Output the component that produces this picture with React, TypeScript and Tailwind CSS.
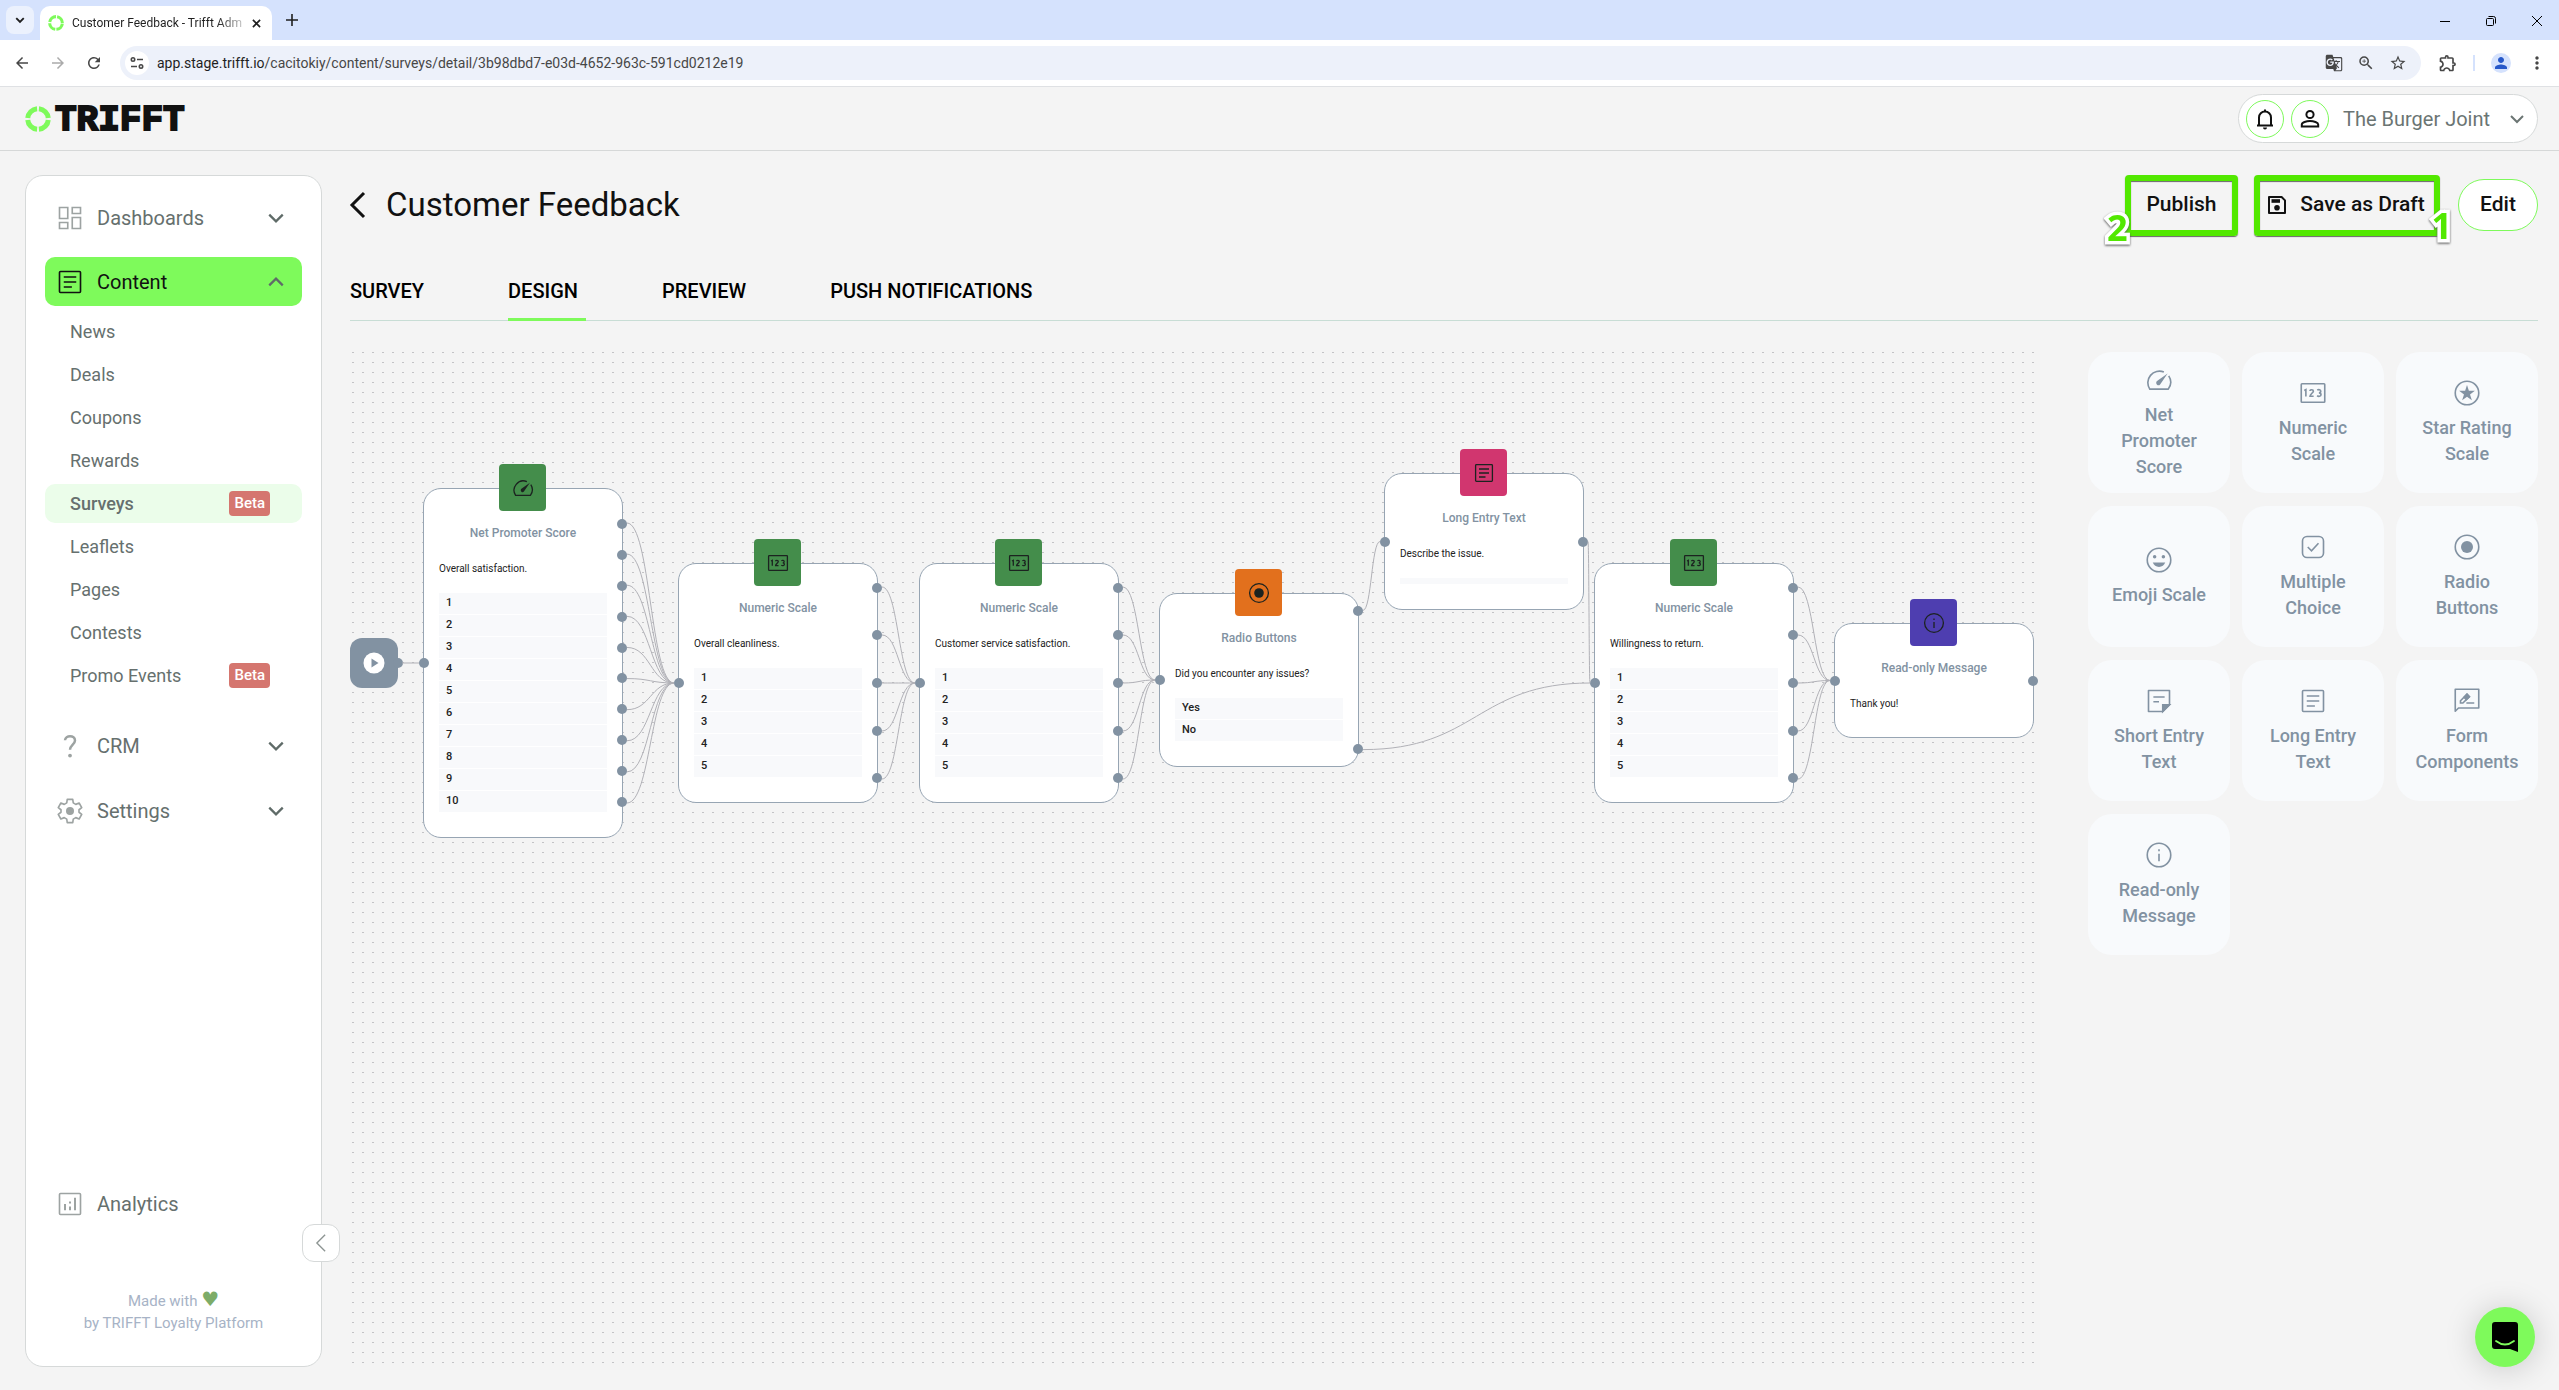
import { ReactNode, useState } from "react";
import {
  MdArrowBack,
  MdArrowForward,
  MdGTranslate,
  MdMoreVert,
  MdOutlineExtension,
  MdPerson,
  MdRefresh,
  MdStarOutline,
  MdZoomIn,
} from "react-icons/md";

type IconName =
  | "speed"
  | "numeric"
  | "star"
  | "emoji"
  | "check"
  | "radio"
  | "shortText"
  | "longText"
  | "form"
  | "info"
  | "dashboard"
  | "question"
  | "settings"
  | "analytics"
  | "save"
  | "bell"
  | "user";

interface IStep {
  id: string;
  icon: IconName;
  color: string;
  title: string;
  text: string;
  x: number;
  y: number;
  height: number;
  options?: string[];
  hasField?: boolean;
  outputs: number;
}

// ** Icons
const shapes: Record<IconName, ReactNode> = {
  speed: (
    <>
      <path d="M15.9 5.6A9.3 9.3 0 0 0 4.6 19.3h14.8a9.3 9.3 0 0 0 .4-10.6" />
      <path
        d="M10.4 15.7c-.9-.9-.8-2.200 0-2.900l8.500-6-6 8.700c-.600.900-1.800 1-2.500.200Z"
        fill="currentColor"
        stroke="none"
      />
    </>
  ),
  numeric: (
    <>
      <rect x="2.6" y="4.600" width="18.800" height="14.800" rx=".6" />
      <path d="M5 10l1.300-.700v5.400M9.600 10.300c0-1.200 2.700-1.300 2.700.2 0 1.200-2.700 2.400-2.700 4.100h2.900M15.400 9.700c1-.700 2.800-.4 2.800.9 0 1-.8 1.300-1.500 1.300 1 0 1.700.5 1.700 1.400 0 1.500-2.200 1.700-3.100.8" />
    </>
  ),
  star: (
    <>
      <circle cx="12" cy="12" r="9.400" />
      <path
        d="M12 5.600l1.500 4.600h4.800l-3.900 2.900 1.500 4.700-3.900-2.900-3.900 2.900 1.500-4.700-3.900-2.900h4.800Z"
        fill="currentColor"
        stroke="none"
      />
    </>
  ),
  emoji: (
    <>
      <circle cx="12" cy="12" r="9.400" />
      <g fill="currentColor" stroke="none">
        <circle cx="8.500" cy="9.300" r="1.400" />
        <circle cx="15.500" cy="9.300" r="1.400" />
        <path d="M7 14h10c-.8 2.200-2.700 3.500-5 3.500S7.800 16.200 7 14Z" />
      </g>
    </>
  ),
  check: (
    <>
      <rect x="3.600" y="3.600" width="16.800" height="16.800" rx="3.600" />
      <path d="M7.800 12l3 3 5.600-6" />
    </>
  ),
  radio: (
    <>
      <circle cx="12" cy="12" r="9.400" />
      <circle cx="12" cy="12" r="4.800" fill="currentColor" stroke="none" />
    </>
  ),
  shortText: (
    <>
      <path d="M3.600 3.600h16.800v11.400l-5.400 5.400H3.600Z" strokeLinejoin="round" />
      <path d="M15 20.400V15h5.400Z" fill="currentColor" />
      <path d="M7.500 8.800h9M7.500 12.600h4.500" />
    </>
  ),
  longText: (
    <>
      <rect x="3.600" y="3.600" width="16.800" height="16.800" rx=".8" />
      <path d="M7 8h10M7 12h10M7 16h6.500" />
    </>
  ),
  form: (
    <>
      <path d="M2.600 2.600h18.800v15H5.200l-2.600 2.600Z" strokeLinejoin="round" />
      <path d="M11.500 13.600h6.300M6.800 13.600v-1.800l5.200-5.200 1.900 1.900-5.200 5.100Z" />
      <path d="M9.600 9l2.400-2.400 1.900 1.900-2.400 2.400Z" fill="currentColor" />
    </>
  ),
  info: (
    <>
      <circle cx="12" cy="12" r="9.400" />
      <path d="M12 11v6M12 7.400v1.500" />
    </>
  ),
  dashboard: (
    <path d="M3.600 3.600h6.600v8.800H3.600ZM13.800 3.600h6.600v4.800h-6.600ZM13.800 11.600h6.600v8.800h-6.600ZM3.600 15.600h6.600v4.800H3.600Z" />
  ),
  question: (
    <>
      <path d="M8 7.400c.3-4.400 8-4.400 8 .2 0 3-4 3.600-4 7.400" strokeWidth="2" />
      <circle cx="12" cy="19.600" r="1.500" fill="currentColor" stroke="none" />
    </>
  ),
  settings: (
    <>
      <path
        d="M9.800 2.700h4.400l.4 2.800 2 1.200 2.700-1.100 2.100 3.700-2.200 1.700v2l2.200 1.700-2.100 3.700-2.700-1.100-2 1.200-.4 2.800H9.800l-.4-2.800-2-1.200-2.700 1.100-2.100-3.700L4.800 13v-2L2.600 9.300l2.100-3.700 2.700 1.100 2-1.200Z"
        strokeLinejoin="round"
      />
      <circle cx="12" cy="12" r="3.200" fill="currentColor" stroke="none" />
    </>
  ),
  analytics: (
    <>
      <rect x="3.600" y="3.600" width="16.800" height="16.800" rx=".8" />
      <path d="M8 12v5M12 14v3M12 10v1.600M16 7v10" strokeWidth="1.600" />
    </>
  ),
  save: (
    <>
      <path d="M4 4h12.600L20 7.400V20H4Z" strokeWidth="2" strokeLinejoin="round" />
      <path d="M6.500 6.200h8.500v3.600H6.500Z" fill="currentColor" stroke="none" />
      <circle cx="12" cy="14.800" r="2.800" fill="currentColor" stroke="none" />
    </>
  ),
  bell: (
    <>
      <path d="M4 18.500h16M6 18v-7.500a6 6 0 0 1 12 0V18M12 4.500V2.500" strokeWidth="2" />
      <path d="M10 20.500h4a2 2 0 0 1-4 0Z" fill="currentColor" stroke="none" />
    </>
  ),
  user: (
    <>
      <circle cx="12" cy="7.500" r="3.600" strokeWidth="2" />
      <path d="M3.800 19.500v-2c0-2 4.500-3.500 8.200-3.500s8.200 1.500 8.200 3.500v2Z" strokeWidth="2" />
    </>
  ),
};

const Icon = ({ name, className = "size-[30px]" }: { name: IconName; className?: string }) => (
  <svg
    viewBox="0 0 24 24"
    fill="none"
    stroke="currentColor"
    strokeWidth="1.3"
    className={`shrink-0 ${className}`}
    aria-hidden="true"
  >
    {shapes[name]}
  </svg>
);

const Chevron = ({ dir = "down", className = "" }: { dir?: "down" | "up" | "left"; className?: string }) => {
  const paths = { down: "M2 5l6 6 6-6", up: "M2 11l6-6 6 6", left: "M11 2L5 8l6 6" };
  return (
    <svg viewBox="0 0 16 16" fill="none" stroke="currentColor" className={`shrink-0 ${className}`} aria-hidden="true">
      <path d={paths[dir]} />
    </svg>
  );
};

const Ring = ({ className }: { className: string }) => (
  <svg viewBox="0 0 26 26" fill="none" className={`shrink-0 ${className}`} aria-hidden="true">
    <circle
      cx="13"
      cy="13"
      r="10.300"
      stroke="#7efa5b"
      strokeWidth="5"
      pathLength="100"
      strokeDasharray="22 3"
      strokeDashoffset="-1.500"
    />
  </svg>
);

// ** Data
const subItems = [
  { label: "News" },
  { label: "Deals" },
  { label: "Coupons" },
  { label: "Rewards" },
  { label: "Surveys", beta: true },
  { label: "Leaflets" },
  { label: "Pages" },
  { label: "Contests" },
  { label: "Promo Events", beta: true },
];

const tabs = ["SURVEY", "DESIGN", "PREVIEW", "PUSH NOTIFICATIONS"];

const palette: { icon: IconName; label: string }[] = [
  { icon: "speed", label: "Net Promoter Score" },
  { icon: "numeric", label: "Numeric Scale" },
  { icon: "star", label: "Star Rating Scale" },
  { icon: "emoji", label: "Emoji Scale" },
  { icon: "check", label: "Multiple Choice" },
  { icon: "radio", label: "Radio Buttons" },
  { icon: "shortText", label: "Short Entry Text" },
  { icon: "longText", label: "Long Entry Text" },
  { icon: "form", label: "Form Components" },
  { icon: "info", label: "Read-only Message" },
];

const NODE_WIDTH = 200;
const range = (count: number) => Array.from({ length: count }, (_, idx) => `${idx + 1}`);

const steps: IStep[] = [
  { id: "nps", icon: "speed", color: "bg-[#448d4b]", title: "Net Promoter Score", text: "Overall satisfaction.", x: 73, y: 138, height: 350, options: range(10), outputs: 10 },
  { id: "clean", icon: "numeric", color: "bg-[#448d4b]", title: "Numeric Scale", text: "Overall cleanliness.", x: 328, y: 213, height: 240, options: range(5), outputs: 5 },
  { id: "service", icon: "numeric", color: "bg-[#448d4b]", title: "Numeric Scale", text: "Customer service satisfaction.", x: 569, y: 213, height: 240, options: range(5), outputs: 5 },
  { id: "issues", icon: "radio", color: "bg-[#e2701d]", title: "Radio Buttons", text: "Did you encounter any issues?", x: 809, y: 243, height: 174, options: ["Yes", "No"], outputs: 2 },
  { id: "describe", icon: "longText", color: "bg-[#d1366f]", title: "Long Entry Text", text: "Describe the issue.", x: 1034, y: 123, height: 137, hasField: true, outputs: 1 },
  { id: "return", icon: "numeric", color: "bg-[#448d4b]", title: "Numeric Scale", text: "Willingness to return.", x: 1244, y: 213, height: 240, options: range(5), outputs: 5 },
  { id: "thanks", icon: "info", color: "bg-[#4e3eb0]", title: "Read-only Message", text: "Thank you!", x: 1484, y: 273, height: 115, outputs: 1 },
];

// outputs are spread between 10% and 90% of the node height
const outputShare = (idx: number, count: number) => (count === 1 ? 0.5 : 0.1 + (0.8 * idx) / (count - 1));

const edgePath = (from: string, idx: number, to: string) => {
  const source = steps.find((step) => step.id === from)!;
  const target = steps.find((step) => step.id === to)!;
  const x1 = source.x + NODE_WIDTH + 4;
  const y1 = source.y + source.height * outputShare(idx, source.outputs);
  const x2 = target.x - 4;
  const y2 = target.y + target.height / 2;
  const mid = (x1 + x2) / 2;
  return `M${x1},${y1} C${mid},${y1} ${mid},${y2} ${x2},${y2}`;
};

const edges = [
  ...range(10).map((_, idx) => edgePath("nps", idx, "clean")),
  ...range(5).map((_, idx) => edgePath("clean", idx, "service")),
  ...range(5).map((_, idx) => edgePath("service", idx, "issues")),
  edgePath("issues", 0, "describe"),
  edgePath("issues", 1, "return"),
  edgePath("describe", 0, "return"),
  ...range(5).map((_, idx) => edgePath("return", idx, "thanks")),
];

// ** Browser bar
const BrowserBar = () => (
  <header className="text-[#1f1f1f]">
    <div className="flex h-10 items-end bg-[#d5e2fd] pl-1.5">
      <button aria-label="Search tabs" className="mb-1.5 flex size-7 items-center justify-center rounded-lg bg-[#ebf1fd]">
        <Chevron className="size-2.5 stroke-[3]" />
      </button>
      <div className="ml-1.5 flex h-[34px] w-[232px] items-center justify-between rounded-t-[10px] bg-white pr-2 pl-2">
        <div className="flex items-center gap-2">
          <Ring className="size-4" />
          <span className="bg-linear-to-r from-[#1f1f1f] from-85% to-[#c4c4c4] bg-clip-text text-xs whitespace-nowrap text-transparent">
            Customer Feedback - Trifft Adm
          </span>
        </div>
        <button aria-label="Close tab" className="flex size-4 items-center justify-center">
          <svg viewBox="0 0 10 10" stroke="currentColor" strokeWidth="1.800" className="size-[9px]">
            <path d="M1 1l8 8M9 1l-8 8" />
          </svg>
        </button>
      </div>
      <button aria-label="New tab" className="mb-3.5 ml-3.5 flex size-3 items-center justify-center">
        <svg viewBox="0 0 12 12" stroke="currentColor" strokeWidth="1.600" className="size-3">
          <path d="M6 0v12M0 6h12" />
        </svg>
      </button>
      <div className="mr-[17px] mb-3.5 ml-auto flex items-center gap-9 text-black">
        <button aria-label="Minimize">
          <svg viewBox="0 0 10 10" stroke="currentColor" className="size-2.5">
            <path d="M0 5.500h10" />
          </svg>
        </button>
        <button aria-label="Restore">
          <svg viewBox="0 0 10 10" fill="none" stroke="currentColor" className="size-2.5">
            <rect x=".5" y="2.500" width="7" height="7" rx="1" />
            <path d="M2.500.5h5a2 2 0 0 1 2 2v5" />
          </svg>
        </button>
        <button aria-label="Close">
          <svg viewBox="0 0 10 10" stroke="currentColor" className="size-2.5">
            <path d="M0 0l10 10M10 0L0 10" />
          </svg>
        </button>
      </div>
    </div>
    <div className="flex h-[47px] items-center border-b border-[#dfe1e4] bg-white pr-3 pl-[13px] text-[#474747]">
      <button aria-label="Back">
        <MdArrowBack className="size-[18px]" />
      </button>
      <button aria-label="Forward" className="ml-[18px] text-[#ababab]">
        <MdArrowForward className="size-[18px]" />
      </button>
      <button aria-label="Reload" className="ml-[18px]">
        <MdRefresh className="size-[18px]" />
      </button>
      <div className="ml-[17px] flex h-[34px] flex-1 items-center rounded-full bg-[#edf1fa] pr-3.5 pl-[5px]">
        <button aria-label="Site information" className="flex size-6 items-center justify-center rounded-full bg-white">
          <svg viewBox="0 0 14 14" fill="none" stroke="currentColor" strokeWidth="1.600" className="size-3.5">
            <circle cx="3" cy="3.500" r="1.700" />
            <path d="M7 3.500h6M1 10.500h6" />
            <circle cx="11" cy="10.500" r="1.700" />
          </svg>
        </button>
        <a href="#url" className="ml-2 flex-1 text-sm text-[#1f1f1f]">
          app.stage.trifft.io
          <span className="text-[#474747]">/cacitokiy/content/surveys/detail/3b98dbd7-e03d-4652-963c-591cd0212e19</span>
        </a>
        <div className="flex items-center gap-3.5">
          <button aria-label="Translate">
            <MdGTranslate className="size-[18px]" />
          </button>
          <button aria-label="Zoom">
            <MdZoomIn className="size-[18px]" />
          </button>
          <button aria-label="Bookmark">
            <MdStarOutline className="size-[18px]" />
          </button>
        </div>
      </div>
      <button aria-label="Extensions" className="ml-[17px]">
        <MdOutlineExtension className="size-5" />
      </button>
      <span className="ml-[15px] h-4 w-0.5 bg-[#d5e2fd]" />
      <button
        aria-label="Profile"
        className="ml-4 flex size-5 items-center justify-center rounded-full bg-[#d5e2fd] text-[#2758c9]"
      >
        <MdPerson className="size-[18px]" />
      </button>
      <button aria-label="Menu" className="ml-4">
        <MdMoreVert className="size-5" />
      </button>
    </div>
  </header>
);

const TopBar = () => (
  <div className="flex h-16 items-center justify-between border-b border-[#d6d8d8] pr-[21px] pl-[25px]">
    <a href="#home" className="flex items-center gap-1 text-[#111]">
      <Ring className="size-[26px]" />
      <span className="pt-1 font-['Liberation_Mono',monospace] text-[36px] leading-10 font-bold [-webkit-text-stroke:2px_#111]">
        TRIFFT
      </span>
    </a>
    <div className="flex h-[49px] w-[300px] items-center rounded-full border border-[#d6d9d9] bg-white pr-3 pl-[7px]">
      <button
        aria-label="Notifications"
        className="flex size-[38px] items-center justify-center rounded-full border border-[#7efa5b]"
      >
        <Icon name="bell" className="size-6" />
      </button>
      <button
        aria-label="Account"
        className="ml-[7px] flex size-[38px] items-center justify-center rounded-full border border-[#7efa5b]"
      >
        <Icon name="user" className="size-6" />
      </button>
      <button className="ml-3.5 flex flex-1 items-center justify-between text-xl text-[#6b7573]">
        The Burger Joint
        <Chevron className="size-4 stroke-2" />
      </button>
    </div>
  </div>
);

const MenuRow = ({ icon, label, active, dir }: { icon: IconName; label: string; active?: boolean; dir?: "down" | "up" }) => (
  <button
    className={`flex h-[49px] w-full items-center rounded-[10px] pr-[17px] pl-2.5 ${
      active ? "bg-[#7efa5b] text-[#111]" : "text-[#66706e]"
    }`}
  >
    <Icon name={icon} className={active ? "size-[30px]" : "size-[30px] text-[#9da3a2]"} />
    <span className="ml-3 flex-1 text-left text-xl">{label}</span>
    {dir && <Chevron dir={dir} className="size-[18px] stroke-2 text-[#5f6b68]" />}
  </button>
);

const Sidebar = () => (
  <aside className="relative flex w-[297px] shrink-0 flex-col rounded-[18px] border border-[#d6d9d9] bg-white px-[19px] pt-[17px] pb-8">
    <nav className="flex flex-1 flex-col">
      <MenuRow icon="dashboard" label="Dashboards" dir="down" />
      <div className="h-[15px]" />
      <MenuRow icon="longText" label="Content" active dir="up" />
      <ul className="mt-1.5 mb-[26px] space-y-1">
        {subItems.map((item) => (
          <li key={item.label}>
            <a
              href={`#${item.label}`}
              className={`flex h-[39px] items-center justify-between rounded-[10px] pr-8 pl-[25px] text-lg text-[#66706e] ${
                item.label === "Surveys" ? "bg-[#ebfdea] font-medium" : ""
              }`}
            >
              {item.label}
              {item.beta && (
                <span className="rounded-[4px] bg-[#d5766f] px-[5px] text-[15px] leading-[25px] font-medium text-white">
                  Beta
                </span>
              )}
            </a>
          </li>
        ))}
      </ul>
      <MenuRow icon="question" label="CRM" dir="down" />
      <div className="h-4" />
      <MenuRow icon="settings" label="Settings" dir="down" />
      <div className="mt-auto">
        <MenuRow icon="analytics" label="Analytics" />
      </div>
    </nav>
    <p className="mt-[61px] text-center text-[15px] leading-[22px] text-[#a7b3c6]">
      Made with <span className="font-['DejaVu_Sans',sans-serif] text-xl leading-[20px] text-[#7dac68]">♥</span>
      <br />
      by TRIFFT Loyalty Platform
    </p>
    <button
      aria-label="Collapse menu"
      className="absolute -right-[19px] bottom-[104px] flex size-[38px] items-center justify-center rounded-xl border border-[#d6d9d9] bg-white text-[#8d9593]"
    >
      <Chevron dir="left" className="size-[22px]" />
    </button>
  </aside>
);

const Handle = ({ top, side }: { top: number; side: "left" | "right" }) => (
  <span
    className={`absolute size-2.5 -translate-y-1/2 rounded-full bg-[#8292a2] ${
      side === "left" ? "-left-[5px]" : "-right-[5px]"
    }`}
    style={{ top: `${top * 100}%` }}
  />
);

const StepNode = ({ step }: { step: IStep }) => (
  <article
    className="absolute w-[200px] rounded-[18px] border border-[#97a5b3] bg-white px-[15px] pt-[34px] pb-[25px]"
    style={{ left: step.x, top: step.y }}
  >
    <div
      className={`absolute -top-[25px] left-[75px] flex size-[47px] items-center justify-center rounded-[4px] text-[#1c2320] ${step.color}`}
    >
      <Icon name={step.icon} className="size-6" />
    </div>
    <h3 className="text-center text-xs leading-5 font-medium text-[#8292a2]">{step.title}</h3>
    <p className="mt-[18px] text-[10px] leading-4 text-[#222]">{step.text}</p>
    {step.options && (
      <ul className="mt-4 space-y-px text-[11px] leading-[19px] font-medium text-[#222]">
        {step.options.map((option) => (
          <li key={option} className="bg-[#f8f9fb] px-[7px] pb-0.5">
            {option}
          </li>
        ))}
      </ul>
    )}
    {step.hasField && <div className="mt-4 h-1.5 bg-[#f8f9fb]" />}
    <Handle side="left" top={0.5} />
    {range(step.outputs).map((key, idx) => (
      <Handle key={key} side="right" top={outputShare(idx, step.outputs)} />
    ))}
  </article>
);

const Canvas = () => (
  <section aria-label="Survey flow" className="relative min-w-0 flex-1 overflow-hidden">
    <svg className="absolute inset-0 size-full" aria-hidden="true">
      <defs>
        <pattern id="dots" width="10" height="10" patternUnits="userSpaceOnUse">
          <rect x="2" y="2" width="2" height="1" fill="#c3c3c6" />
        </pattern>
      </defs>
      <rect width="100%" height="100%" fill="url(#dots)" />
    </svg>
    <div className="absolute top-[288px] left-0 flex h-[50px] w-12 items-center justify-center rounded-xl bg-[#8292a2]">
      <svg viewBox="0 0 22 22" className="size-[22px]" aria-hidden="true">
        <circle cx="11" cy="11" r="10.500" fill="#fff" />
        <path d="M8.500 6.500v9l7-4.500Z" fill="#8292a2" />
      </svg>
      <Handle side="right" top={0.5} />
    </div>
    {steps.map((step) => (
      <StepNode key={step.id} step={step} />
    ))}
    <svg className="pointer-events-none absolute inset-0 size-full" fill="none" stroke="#b1b1b7" aria-hidden="true">
      <path d="M52,313 L69,313" />
      {edges.map((path) => (
        <path key={path} d={path} />
      ))}
    </svg>
  </section>
);

const App = () => {
  const [activeTab, setActiveTab] = useState("DESIGN");

  return (
    <div className="flex min-h-screen flex-col bg-[#f4f4f4] font-[Roboto,sans-serif] text-[#111]">
      <BrowserBar />
      <TopBar />
      <div className="flex flex-1 gap-7 pt-6 pr-[21px] pb-[23px] pl-[25px]">
        <Sidebar />
        <main className="flex min-w-0 flex-1 flex-col">
          <div className="flex h-[60px] items-center">
            <button aria-label="Go back">
              <Chevron dir="left" className="-ml-2 size-8 stroke-[1.5]" />
            </button>
            <h1 className="ml-3 text-[33px] leading-10">Customer Feedback</h1>
            <div className="ml-auto flex items-center text-[21px] font-medium">
              <button className="relative h-[61px] w-[113px] rounded-[4px] border-6 border-[#52e800] shadow-[0_1px_1px_#666,inset_0_1px_1px_#666]">
                Publish
                <span className="absolute -bottom-5 -left-6 font-['Open_Sans',sans-serif] text-[36px] leading-[44px] font-bold text-[#52e800] drop-shadow-[0_1px_1px_#555] [paint-order:stroke] [-webkit-text-stroke:7px_white]">
                  2
                </span>
              </button>
              <button className="relative ml-4 flex h-[61px] w-[186px] items-center justify-center gap-[11px] rounded-[4px] border-6 border-[#52e800] pr-1 shadow-[0_1px_1px_#666,inset_0_1px_1px_#666]">
                <Icon name="save" className="size-6" />
                Save as Draft
                <span className="absolute -right-[18px] -bottom-[18px] font-['Open_Sans',sans-serif] text-[36px] leading-[44px] font-bold text-[#52e800] drop-shadow-[0_1px_1px_#555] [paint-order:stroke] [-webkit-text-stroke:7px_white]">
                  1
                </span>
              </button>
              <button className="ml-[18px] h-[52px] w-20 rounded-full border border-[#7efa5b] bg-white">Edit</button>
            </div>
          </div>
          <div role="tablist" className="mt-[25px] flex gap-[76px] border-b border-[#c8ddd5]">
            {tabs.map((tab) => (
              <button
                key={tab}
                role="tab"
                aria-selected={tab === activeTab}
                onClick={() => setActiveTab(tab)}
                className={`-mb-px h-[61px] border-b-3 pt-[3px] pr-2 text-xl font-medium text-black ${
                  tab === activeTab ? "border-[#7efa5b]" : "border-transparent"
                }`}
              >
                {tab}
              </button>
            ))}
          </div>
          <div className="mt-[29px] flex flex-1 gap-[50px]">
            <Canvas />
            <div className="mt-0.5 grid auto-rows-[141px] grid-cols-[repeat(3,142px)] content-start gap-x-3 gap-y-[13px]">
              {palette.map((item) => (
                <button
                  key={item.label}
                  className="flex flex-col items-center justify-center gap-[7px] rounded-3xl bg-[#f8fafc] px-5 text-lg leading-[26px] font-medium text-[#8292a2]"
                >
                  <Icon name={item.icon} />
                  {item.label}
                </button>
              ))}
            </div>
          </div>
        </main>
      </div>
      <button
        aria-label="Open chat"
        className="fixed right-6 bottom-[23px] flex size-[60px] items-center justify-center rounded-full bg-[#7efa5b] shadow-[0_2px_32px_rgba(0,0,0,0.18)]"
      >
        <svg viewBox="0 0 26 30" className="h-[30px] w-[26px]" aria-hidden="true">
          <path d="M3 0h20a3 3 0 0 1 3 3v27l-8-3H3a3 3 0 0 1-3-3V3a3 3 0 0 1 3-3Z" fill="#000" />
          <path d="M4 19q9 7 18 0" fill="none" stroke="#7efa5b" strokeWidth="1.800" strokeLinecap="round" />
        </svg>
      </button>
    </div>
  );
};

export default App;
